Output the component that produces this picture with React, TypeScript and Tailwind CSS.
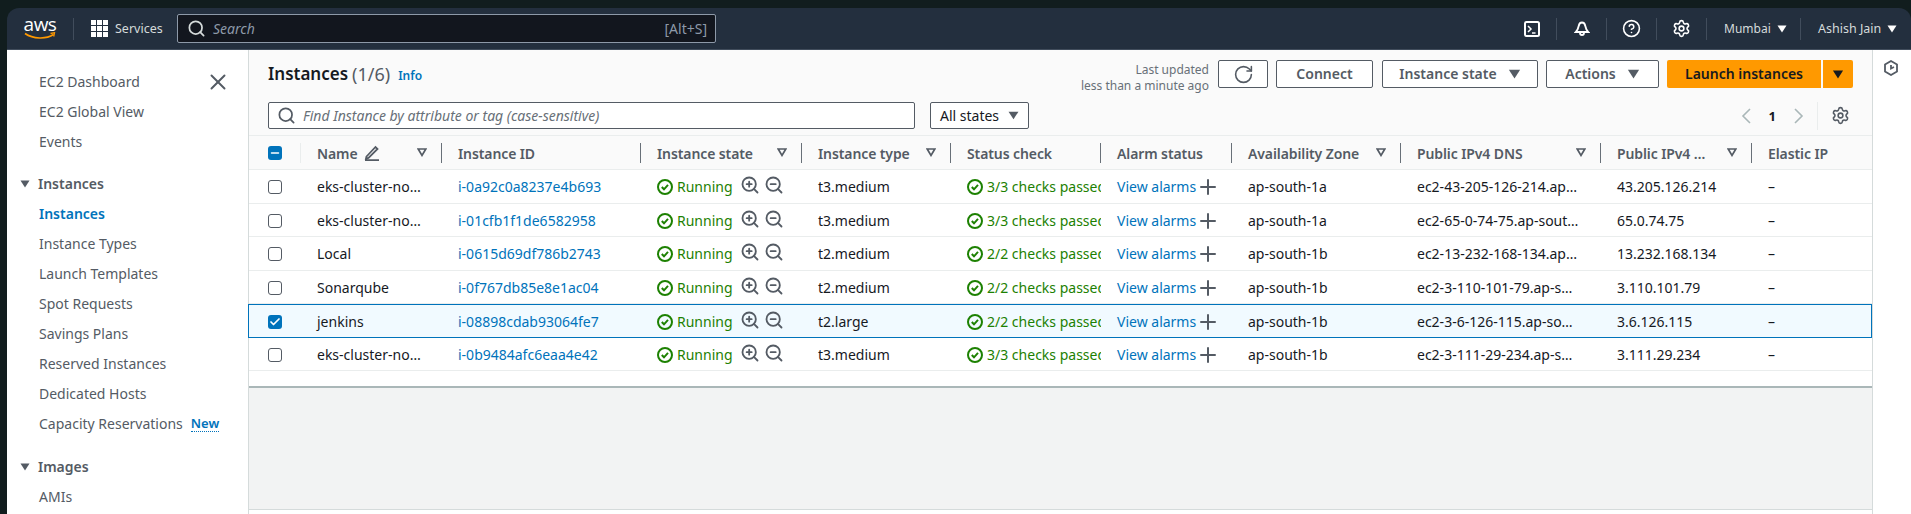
import { Check, CircleHelp, Minus, Plus, RotateCw, Search, Settings, X, ZoomIn, ZoomOut } from "lucide-react"

const instances = [
    { name: "eks-cluster-no…", id: "i-0a92c0a8237e4b693", type: "t3.medium", checks: "3/3 checks passed", zone: "ap-south-1a", dns: "ec2-43-205-126-214.ap…", ip: "43.205.126.214" },
    { name: "eks-cluster-no…", id: "i-01cfb1f1de6582958", type: "t3.medium", checks: "3/3 checks passed", zone: "ap-south-1a", dns: "ec2-65-0-74-75.ap-sout…", ip: "65.0.74.75" },
    { name: "Local", id: "i-0615d69df786b2743", type: "t2.medium", checks: "2/2 checks passed", zone: "ap-south-1b", dns: "ec2-13-232-168-134.ap…", ip: "13.232.168.134" },
    { name: "Sonarqube", id: "i-0f767db85e8e1ac04", type: "t2.medium", checks: "2/2 checks passed", zone: "ap-south-1b", dns: "ec2-3-110-101-79.ap-s…", ip: "3.110.101.79" },
    { name: "jenkins", id: "i-08898cdab93064fe7", type: "t2.large", checks: "2/2 checks passed", zone: "ap-south-1b", dns: "ec2-3-6-126-115.ap-so…", ip: "3.6.126.115", selected: true },
    { name: "eks-cluster-no…", id: "i-0b9484afc6eaa4e42", type: "t3.medium", checks: "3/3 checks passed", zone: "ap-south-1b", dns: "ec2-3-111-29-234.ap-s…", ip: "3.111.29.234" },
]

const instanceLinks = ["Instance Types", "Launch Templates", "Spot Requests", "Savings Plans", "Reserved Instances", "Dedicated Hosts"]

function Caret({ className }: { className: string }) {
    return (
        <svg viewBox="0 0 10 8" className={className} fill="currentColor">
            <path d="M0.5 0.5h9L5 7.5z" />
        </svg>
    )
}

function FilterIcon() {
    return (
        <svg viewBox="0 0 10 9" className="w-[10px] h-[9px] text-[#545b64] shrink-0" fill="none" stroke="currentColor" strokeWidth="1.7">
            <path d="M1.2 1h7.6L5 7.4z" />
        </svg>
    )
}

function StatusIcon() {
    return (
        <svg viewBox="0 0 16 16" className="w-4 h-4 shrink-0" fill="none" stroke="#1d8102" strokeWidth="2">
            <circle cx="8" cy="8" r="7" />
            <path d="M4.800 8l2.200 2.300 4-4.400" />
        </svg>
    )
}

function HeaderCell({ width, label, filter, pencil }: { width: string; label: string; filter?: boolean; pencil?: boolean }) {
    return (
        <div className={`${width} shrink-0 h-full flex items-center pl-4`}>
            <span className="font-semibold tracking-[-0.1px] text-[#545b64] whitespace-nowrap pt-[3px]">{label}</span>
            {pencil && (
                <svg viewBox="0 0 16 16" className="w-4 h-4 ml-[6px] text-[#545b64]" fill="none" stroke="currentColor" strokeWidth="1.800">
                    <path d="M2.500 11.500L11.500 2l2 2L4.500 13l-2.500.5zM1 15.200h14" />
                </svg>
            )}
            <span className="flex-1" />
            {filter && <FilterIcon />}
            <span className={`w-px h-5 bg-[#687078] ${filter ? "ml-[14px]" : ""}`} />
        </div>
    )
}

function OutlineButton({ label, caret, width }: { label: string; caret?: boolean; width: string }) {
    return (
        <div className={`${width} h-7 flex items-center justify-center gap-[11px] bg-white border border-[#545b64] rounded-[2px] font-semibold text-[#545b64]`}>
            {label}
            {caret && <Caret className="w-[13px] h-[10px]" />}
        </div>
    )
}

function NavDivider() {
    return <span className="w-px h-[22px] bg-[#414d5c] shrink-0" />
}

function NavIcon({ children }: { children: React.ReactNode }) {
    return <div className="w-[49px] h-full flex items-center justify-center text-white">{children}</div>
}

function Sidebar() {
    return (
        <aside className="w-[241px] shrink-0 bg-white pt-[17px] text-[#545b64] overflow-hidden">
            <div className="h-[30px] flex items-center justify-between pl-8 pr-[17px]">
                EC2 Dashboard
                <X size={26} strokeWidth={1.8} />
            </div>
            <div className="h-[30px] flex items-center pl-8">EC2 Global View</div>
            <div className="h-[30px] flex items-center pl-8">Events</div>

            <div className="h-[30px] mt-3 flex items-center pl-[13px] gap-2 font-semibold">
                <Caret className="w-[10px] h-2" />
                Instances
            </div>
            <div className="h-[30px] flex items-center pl-8 font-semibold text-[#0073bb]">Instances</div>
            {instanceLinks.map((link) => (
                <div key={link} className="h-[30px] flex items-center pl-8">
                    {link}
                </div>
            ))}
            <div className="h-[30px] flex items-center pl-8">
                Capacity Reservations
                <span className="ml-2 text-[13px] font-semibold leading-[15px] text-[#0073bb] border-b border-dotted border-[#0073bb]">New</span>
            </div>

            <div className="h-[30px] mt-[13px] flex items-center pl-[13px] gap-2 font-semibold">
                <Caret className="w-[10px] h-2" />
                Images
            </div>
            <div className="h-[30px] flex items-center pl-8">AMIs</div>
        </aside>
    )
}

export default function App() {
    return (
        <div className="h-screen w-full overflow-hidden bg-[#111d1e] pt-2 pl-[7px] flex flex-col font-['Noto_Sans',sans-serif] text-[14px] leading-5">
            {/* Top nav */}
            <header className="h-[42px] shrink-0 bg-[#232f3e] border-b border-[#414d5c] rounded-t-[12px] flex items-center text-[#d5dbdb] text-[12.5px]">
                <div className="w-[66px] h-full flex flex-col items-center justify-center">
                    <span className="text-white font-['Open_Sans',sans-serif] text-[19px] leading-[15px] h-[15px] tracking-[-0.5px]">aws</span>
                    <svg viewBox="0 0 32 8" className="w-8 h-2">
                        <path d="M1 1.500C9 7 22 7.500 29.500 2.500" fill="none" stroke="#ff9900" strokeWidth="1.600" />
                        <path d="M26.500 1.500l4-.8-.8 3.800" fill="none" stroke="#ff9900" strokeWidth="1.300" />
                    </svg>
                </div>
                <NavDivider />
                <div className="ml-[17px] w-[17px] grid grid-cols-3 gap-[1.5px] shrink-0">
                    {[0, 1, 2, 3, 4, 5, 6, 7, 8].map((i) => (
                        <span key={i} className="h-[4.5px] bg-white" />
                    ))}
                </div>
                <span className="ml-[7px] w-[62px]">Services</span>
                <div className="w-[539px] h-[29px] flex items-center bg-[#12161e] border border-[#8d99a8] rounded-[2px] pl-[9px] pr-[8px] text-[14px] text-[#8d99a8]">
                    <Search size={19} strokeWidth={2.2} className="text-[#d5dbdb]" />
                    <span className="ml-[7px] italic flex-1">Search</span>
                    <span>[Alt+S]</span>
                </div>
                <span className="flex-1" />
                <NavIcon>
                    <svg viewBox="0 0 16 16" className="w-4 h-4" fill="none" stroke="currentColor" strokeWidth="2">
                        <rect x="1" y="1" width="14" height="14" rx="1.500" />
                        <path d="M4 5l3 3-3 3" strokeWidth="1.500" />
                        <path d="M8 12h3.500" strokeWidth="1.500" />
                    </svg>
                </NavIcon>
                <NavDivider />
                <NavIcon>
                    <svg viewBox="0 0 16 16" className="w-4 h-4" fill="none" stroke="currentColor" strokeWidth="1.800">
                        <path d="M8 1.500c2 0 3 1.500 3.300 3.500.4 2.500 1.200 4 3 6H1.700c1.800-2 2.600-3.500 3-6C5 3 6 1.500 8 1.500z" />
                        <path d="M6 12a2 2 0 0 0 4 0" />
                    </svg>
                </NavIcon>
                <NavDivider />
                <NavIcon>
                    <CircleHelp size={19} strokeWidth={2} />
                </NavIcon>
                <NavDivider />
                <NavIcon>
                    <Settings size={19} strokeWidth={2} />
                </NavIcon>
                <NavDivider />
                <div className="w-[93px] h-full flex items-center pl-[17px] text-[12px]">
                    Mumbai
                    <Caret className="w-[10px] h-2 ml-[6px] text-white" />
                </div>
                <NavDivider />
                <div className="w-[110px] h-full flex items-center pl-[17px]">
                    Ashish Jain
                    <Caret className="w-[10px] h-2 ml-[6px] text-white" />
                </div>
            </header>

            <div className="flex-1 min-h-0 flex">
                <Sidebar />

                {/* Main */}
                <main className="w-[1624px] shrink-0 flex flex-col border-l border-[#d5dbdb] bg-[#f2f3f3]">
                    <div className="h-[86px] shrink-0 bg-[#fafafa] border-b border-[#eaeded] pl-[19px] pr-[19px] pt-[10px]">
                        <div className="h-7 flex items-center">
                            <h1 className="text-[17px] font-semibold text-[#16191f]">Instances</h1>
                            <span className="ml-[4px] text-[18px] text-[#545b64]">(1/6)</span>
                            <span className="ml-2 pt-[3px] text-[12px] font-semibold text-[#0073bb]">Info</span>
                            <span className="flex-1" />
                            <div className="text-right text-[12px] leading-4 text-[#687078] mr-[9px] pt-[7px] whitespace-nowrap">
                                <div>Last updated</div>
                                <div>less than a minute ago</div>
                            </div>
                            <div className="w-[50px] h-7 flex items-center justify-center bg-white border border-[#545b64] rounded-[2px] text-[#545b64]">
                                <RotateCw size={21} strokeWidth={1.8} />
                            </div>
                            <div className="ml-2"><OutlineButton label="Connect" width="w-[97px]" /></div>
                            <div className="ml-[9px]"><OutlineButton label="Instance state" caret width="w-[156px]" /></div>
                            <div className="ml-2"><OutlineButton label="Actions" caret width="w-[113px]" /></div>
                            <div className="ml-2 w-[154px] h-7 flex items-center justify-center bg-[#ff9900] rounded-l-[2px] font-semibold text-[#16191f]">
                                Launch instances
                            </div>
                            <div className="ml-[2px] w-[30px] h-7 flex items-center justify-center bg-[#ff9900] rounded-r-[2px] text-[#16191f]">
                                <Caret className="w-[12px] h-[9px]" />
                            </div>
                        </div>
                        <div className="mt-[14px] h-[27px] flex items-center">
                            <div className="w-[647px] h-full flex items-center bg-white border border-[#545b64] rounded-[2px] pl-[8px]">
                                <Search size={19} strokeWidth={2.2} className="text-[#545b64]" />
                                <span className="ml-[7px] italic text-[#687078]">Find Instance by attribute or tag (case-sensitive)</span>
                            </div>
                            <div className="ml-[15px] w-[99px] h-full flex items-center bg-white border border-[#545b64] rounded-[2px] pl-[9px] gap-[9px] text-[#16191f]">
                                All states
                                <Caret className="w-[11px] h-[9px] text-[#545b64]" />
                            </div>
                            <span className="flex-1" />
                            <svg viewBox="0 0 10 16" className="w-[10px] h-4 text-[#aab7b8]" fill="none" stroke="currentColor" strokeWidth="1.600">
                                <path d="M9 1L2 8l7 7" />
                            </svg>
                            <span className="mx-[18px] font-bold text-[13px] text-[#16191f]">1</span>
                            <svg viewBox="0 0 10 16" className="w-[10px] h-4 text-[#aab7b8]" fill="none" stroke="currentColor" strokeWidth="1.600">
                                <path d="M1 1l7 7-7 7" />
                            </svg>
                            <span className="ml-[13px] w-px h-7 bg-[#eaeded]" />
                            <Settings size={19} strokeWidth={2} className="ml-[13px] mr-[3px] text-[#545b64]" />
                        </div>
                    </div>

                    {/* Table */}
                    <div className="shrink-0 bg-white">
                        <div className="h-[34px] flex bg-[#fafafa] border-b border-[#eaeded]">
                            <div className="w-[52px] shrink-0 h-full flex items-center pl-[19px]">
                                <span className="w-[14px] h-[14px] rounded-[3px] bg-[#0073bb] flex items-center justify-center text-white">
                                    <Minus size={12} strokeWidth={3} />
                                </span>
                                <span className="flex-1" />
                                <span className="w-px h-5 bg-[#eaeded]" />
                            </div>
                            <HeaderCell width="w-[141px]" label="Name" pencil filter />
                            <HeaderCell width="w-[199px]" label="Instance ID" />
                            <HeaderCell width="w-[161px]" label="Instance state" filter />
                            <HeaderCell width="w-[149px]" label="Instance type" filter />
                            <HeaderCell width="w-[150px]" label="Status check" />
                            <HeaderCell width="w-[131px]" label="Alarm status" />
                            <HeaderCell width="w-[169px]" label="Availability Zone" filter />
                            <HeaderCell width="w-[200px]" label="Public IPv4 DNS" filter />
                            <HeaderCell width="w-[151px]" label="Public IPv4 …" filter />
                            <div className="flex-1 h-full flex items-center pl-4 pt-[3px] font-semibold tracking-[-0.1px] text-[#545b64]">Elastic IP</div>
                        </div>
                        {instances.map((row) => (
                            <div
                                key={row.id}
                                className={`h-[33.5px] pt-[2px] flex items-center text-[#16191f] ${
                                    row.selected ? "bg-[#f1faff] border border-[#0073bb] -ml-px" : "border-b border-[#eaeded]"
                                }`}
                            >
                                <div className="w-[52px] shrink-0 pl-[19px]">
                                    {row.selected ? (
                                        <span className="w-[14px] h-[14px] rounded-[3px] bg-[#0073bb] flex items-center justify-center text-white">
                                            <Check size={12} strokeWidth={3.5} />
                                        </span>
                                    ) : (
                                        <span className="block w-[14px] h-[14px] rounded-[3px] bg-white border border-[#545b64]" />
                                    )}
                                </div>
                                <div className="w-[141px] shrink-0 pl-4 whitespace-nowrap">{row.name}</div>
                                <div className="w-[199px] shrink-0 pl-4 text-[#0073bb]">{row.id}</div>
                                <div className="w-[161px] shrink-0 pl-4 flex items-center text-[#1d8102]">
                                    <StatusIcon />
                                    <span className="ml-1">Running</span>
                                    <ZoomIn size={20} strokeWidth={2.2} className="ml-[7px] -mt-[4px] text-[#545b64]" />
                                    <ZoomOut size={20} strokeWidth={2.2} className="ml-[4px] -mt-[4px] text-[#545b64]" />
                                </div>
                                <div className="w-[149px] shrink-0 pl-4">{row.type}</div>
                                <div className="w-[150px] shrink-0 pl-4 flex items-center overflow-hidden whitespace-nowrap text-[#1d8102]">
                                    <StatusIcon />
                                    <span className="ml-1">{row.checks}</span>
                                </div>
                                <div className="w-[131px] shrink-0 pl-4 flex items-center text-[#0073bb] whitespace-nowrap">
                                    View alarms
                                    <Plus size={24} strokeWidth={2} className="text-[#545b64]" />
                                </div>
                                <div className="w-[169px] shrink-0 pl-4">{row.zone}</div>
                                <div className="w-[200px] shrink-0 pl-4 whitespace-nowrap">{row.dns}</div>
                                <div className="w-[151px] shrink-0 pl-4">{row.ip}</div>
                                <div className="flex-1 pl-4">–</div>
                            </div>
                        ))}
                        <div className="h-[15px]" />
                    </div>
                    <div className="flex-1 bg-[#f2f3f3] border-t-2 border-[#aab7b8]" />
                    <div className="h-[5px] shrink-0 bg-white border-t border-[#d5dbdb]" />
                </main>

                {/* Right rail */}
                <aside className="flex-1 bg-white border-l border-[#d5dbdb] pt-[10px] flex justify-center">
                    <svg viewBox="0 0 16 16" className="w-4 h-4 text-[#545b64] mr-[2px]" fill="none" stroke="currentColor" strokeWidth="1.800">
                        <path d="M8 1l6 3.500v7L8 15l-6-3.500v-7z" />
                        <path d="M8 5v3.500l3-1.500" />
                    </svg>
                </aside>
            </div>
        </div>
    )
}
